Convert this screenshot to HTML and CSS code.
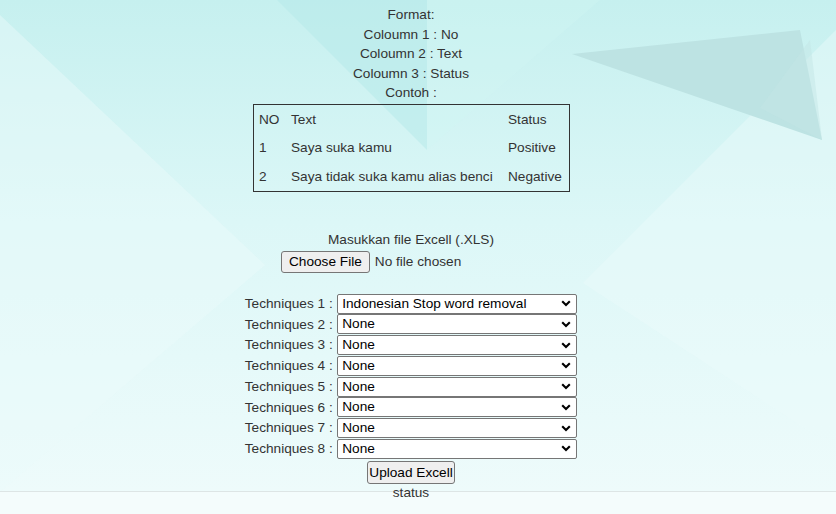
FILE: index.html
```html
<!DOCTYPE html>
<html lang="id">
<head>
<meta charset="utf-8">
<title>Upload Excell</title>
<link rel="stylesheet" href="styles.css">
</head>
<body>
<svg class="backdrop" width="836" height="492" viewBox="0 0 836 492" aria-hidden="true">
  <defs>
    <linearGradient id="base" x1="0" y1="0" x2="0" y2="1">
      <stop offset="0" stop-color="#c6f0ef"/>
      <stop offset="0.45" stop-color="#dcf7f7"/>
      <stop offset="1" stop-color="#eefbfb"/>
    </linearGradient>
  </defs>
  <rect x="0" y="0" width="836" height="492" fill="url(#base)"/>
  <polygon points="0,15 265,265 0,492" fill="#eafbfb" opacity="0.45"/>
  <polygon points="277,0 427,0 427,150" fill="#b6eaea" opacity="0.55"/>
  <polygon points="427,0 600,0 427,150" fill="#d2f5f4" opacity="0.35"/>
  <polygon points="836,30 583,283 815,435 836,440" fill="#ebfbfb" opacity="0.45"/>
  <polygon points="572,54 800,30 822,140" fill="#bde3e3"/>
  <polygon points="760,108 810,40 822,140" fill="#c4e6e6" opacity="0.5"/>
  <rect x="0" y="491" width="836" height="1" fill="#dde5e5"/>
</svg>

<main class="page">
  <div class="format">
    Format:<br>
    Coloumn 1 : No<br>
    Coloumn 2 : Text<br>
    Coloumn 3 : Status<br>
    Contoh :
  </div>

  <table class="example">
    <tr><td class="col-no">NO</td><td class="col-text">Text</td><td class="col-status">Status</td></tr>
    <tr><td>1</td><td>Saya suka kamu</td><td>Positive</td></tr>
    <tr><td>2</td><td>Saya tidak suka kamu alias benci</td><td>Negative</td></tr>
  </table>

  <form class="upload">
    <div class="file-label">Masukkan file Excell (.XLS)</div>
    <div class="file-row"><input type="file" class="file-input"></div>

    <div class="techniques">
      <div class="tech-row"><label class="tech-label">Techniques 1 :</label><select class="tech-select"><option>Indonesian Stop word removal</option><option>None</option></select></div>
      <div class="tech-row"><label class="tech-label">Techniques 2 :</label><select class="tech-select"><option>None</option></select></div>
      <div class="tech-row"><label class="tech-label">Techniques 3 :</label><select class="tech-select"><option>None</option></select></div>
      <div class="tech-row"><label class="tech-label">Techniques 4 :</label><select class="tech-select"><option>None</option></select></div>
      <div class="tech-row"><label class="tech-label">Techniques 5 :</label><select class="tech-select"><option>None</option></select></div>
      <div class="tech-row"><label class="tech-label">Techniques 6 :</label><select class="tech-select"><option>None</option></select></div>
      <div class="tech-row"><label class="tech-label">Techniques 7 :</label><select class="tech-select"><option>None</option></select></div>
      <div class="tech-row"><label class="tech-label">Techniques 8 :</label><select class="tech-select"><option>None</option></select></div>
    </div>

    <div class="submit-row"><button type="button" class="btn-upload">Upload Excell</button></div>
  </form>

  <div class="status">status</div>
</main>
</body>
</html>
```

FILE: styles.css
```css
html, body {
  margin: 0;
  padding: 0;
}

body {
  position: relative;
  min-height: 514px;
  background: #f4fcfc;
  font-family: "Liberation Sans", Arial, sans-serif;
  font-size: 13.65px;
  line-height: 19.5px;
  color: #333;
}

.backdrop {
  position: absolute;
  top: 0;
  left: 0;
  z-index: 0;
  display: block;
}

.page {
  position: relative;
  z-index: 1;
  width: 822px;
  text-align: center;
  padding-top: 5px;
}

.format {
  text-align: center;
}

.example {
  margin: 1.5px auto 0;
  width: 317px;
  table-layout: fixed;
  border-collapse: collapse;
  border: 1px solid #333;
  text-align: left;
}

.example td {
  padding: 4.5px 5.5px;
  white-space: nowrap;
  line-height: 19.5px;
}

.col-no { width: 21px; }
.col-text { width: 206px; }

.upload {
  margin: 0;
}

.file-label {
  margin-top: 38.5px;
}

.file-row {
  display: flex;
  justify-content: center;
  margin-top: 1.6px;
  height: 22px;
}

.file-input {
  width: 260px;
  height: 22px;
  margin: 0;
  font: inherit;
  color: #333;
  text-align: left;
}

.file-input::file-selector-button {
  font: inherit;
  line-height: 18px;
  padding: 1px 7px;
  margin: 0 5px 0 0;
  border: 1px solid #767676;
  border-radius: 3px;
  background: #efefef;
  color: #000;
}

.techniques {
  margin-top: 20.7px;
  display: flex;
  flex-direction: column;
  gap: 1.25px;
}

.tech-row {
  display: flex;
  justify-content: center;
  align-items: center;
  gap: 4.5px;
  height: 19.5px;
}

.tech-label {
  white-space: nowrap;
}

.tech-select {
  -webkit-appearance: none;
  appearance: none;
  box-sizing: border-box;
  width: 240px;
  height: 20px;
  margin: 0;
  padding: 0 20px 0 4px;
  font-family: "Liberation Sans", Arial, sans-serif;
  font-size: 13.65px;
  line-height: 18px;
  color: #000;
  background-color: #fff;
  background-image: url("data:image/svg+xml,%3Csvg xmlns='http://www.w3.org/2000/svg' width='10' height='7' viewBox='0 0 10 7'%3E%3Cpath d='M1.2 1.3 L5 5.1 L8.8 1.3' fill='none' stroke='%23000' stroke-width='2.1'/%3E%3C/svg%3E");
  background-repeat: no-repeat;
  background-position: right 5px center;
  background-size: 10px 7px;
  border: 1px solid #767676;
  border-radius: 2px;
}

.submit-row {
  display: flex;
  justify-content: center;
  margin-top: 2px;
}

.btn-upload {
  height: 23px;
  margin: 0;
  padding: 0 1px;
  font-family: "Liberation Sans", Arial, sans-serif;
  font-size: 13.65px;
  line-height: 21px;
  color: #000;
  background: #efefef;
  border: 1px solid #767676;
  border-radius: 3px;
}

.status {
  margin-top: -0.5px;
}
```
